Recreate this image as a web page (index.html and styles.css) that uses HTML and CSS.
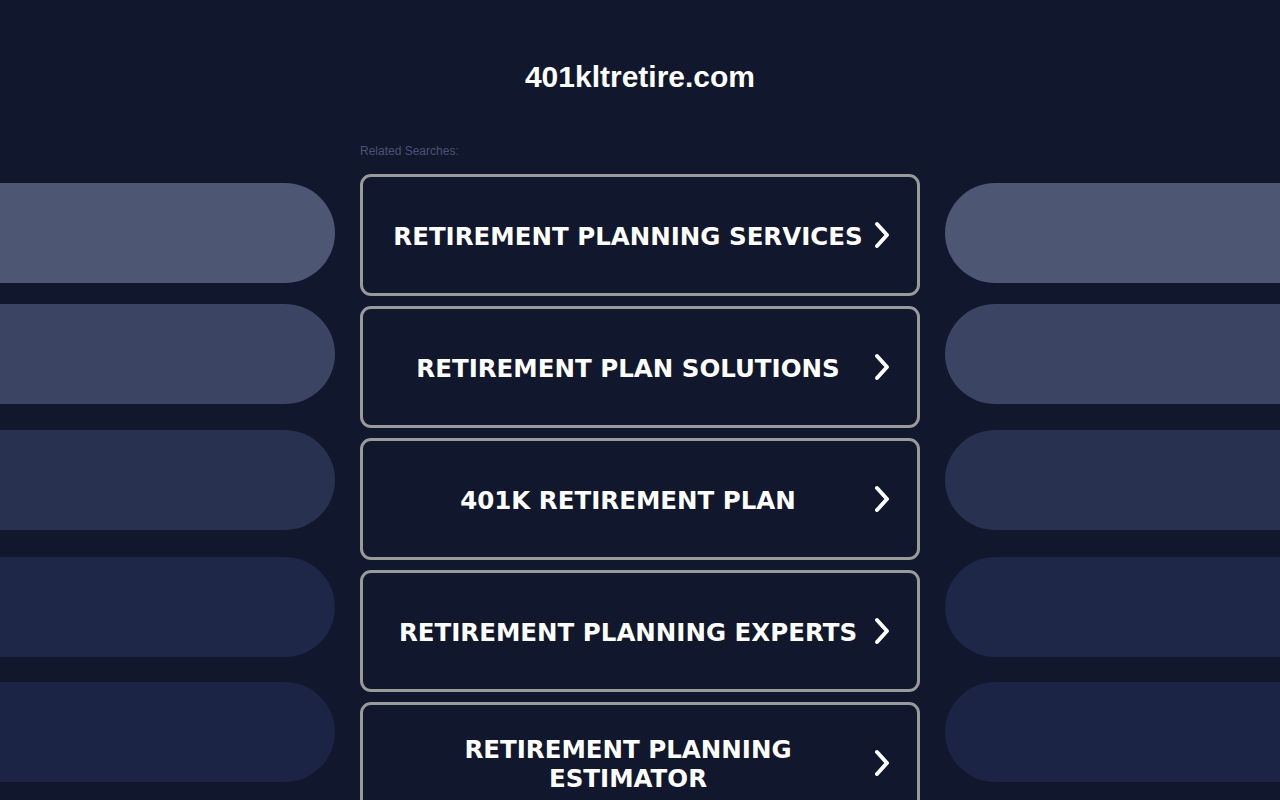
FILE: index.html
```html
<!DOCTYPE html>
<html lang="en">
<head>
<meta charset="utf-8">
<title>401kltretire.com</title>
<link rel="stylesheet" href="styles.css">
</head>
<body>
<header class="header">
  <h1 class="site-title">401kltretire.com</h1>
</header>
<main class="layout">
  <div class="side side-left">
    <div class="pill pill-1"></div>
    <div class="pill pill-2"></div>
    <div class="pill pill-3"></div>
    <div class="pill pill-4"></div>
    <div class="pill pill-5"></div>
  </div>
  <section class="center">
    <div class="related">Related Searches:</div>
    <a class="search-btn" href="#"><span class="label">RETIREMENT PLANNING SERVICES</span><svg class="chev" viewBox="0 0 20 30" width="20" height="30"><path d="M5 4 L15 15 L5 26" fill="none" stroke="#fff" stroke-width="4" stroke-linecap="round" stroke-linejoin="round"/></svg></a>
    <a class="search-btn" href="#"><span class="label">RETIREMENT PLAN SOLUTIONS</span><svg class="chev" viewBox="0 0 20 30" width="20" height="30"><path d="M5 4 L15 15 L5 26" fill="none" stroke="#fff" stroke-width="4" stroke-linecap="round" stroke-linejoin="round"/></svg></a>
    <a class="search-btn" href="#"><span class="label">401K RETIREMENT PLAN</span><svg class="chev" viewBox="0 0 20 30" width="20" height="30"><path d="M5 4 L15 15 L5 26" fill="none" stroke="#fff" stroke-width="4" stroke-linecap="round" stroke-linejoin="round"/></svg></a>
    <a class="search-btn" href="#"><span class="label">RETIREMENT PLANNING EXPERTS</span><svg class="chev" viewBox="0 0 20 30" width="20" height="30"><path d="M5 4 L15 15 L5 26" fill="none" stroke="#fff" stroke-width="4" stroke-linecap="round" stroke-linejoin="round"/></svg></a>
    <a class="search-btn" href="#"><span class="label">RETIREMENT PLANNING ESTIMATOR</span><svg class="chev" viewBox="0 0 20 30" width="20" height="30"><path d="M5 4 L15 15 L5 26" fill="none" stroke="#fff" stroke-width="4" stroke-linecap="round" stroke-linejoin="round"/></svg></a>
  </section>
  <div class="side side-right">
    <div class="pill pill-1"></div>
    <div class="pill pill-2"></div>
    <div class="pill pill-3"></div>
    <div class="pill pill-4"></div>
    <div class="pill pill-5"></div>
  </div>
</main>
</body>
</html>
```

FILE: styles.css
```css
html, body {
  margin: 0;
  padding: 0;
  background: #11172c;
  height: 100%;
  overflow: hidden;
}
body {
  font-family: "Liberation Sans", Arial, sans-serif;
  color: #fff;
}
.header {
  padding-top: 59px;
  text-align: center;
}
.site-title {
  margin: 0;
  font-size: 30px;
  line-height: 36px;
  font-weight: bold;
  color: #fff;
}
.layout {
  display: grid;
  grid-template-columns: 1fr 560px 1fr;
  column-gap: 25px;
}
.side {
  display: flex;
  flex-direction: column;
  padding-top: 88px;
}
.pill {
  height: 100px;
  flex: none;
}
.side-left .pill {
  border-radius: 0 50px 50px 0;
}
.side-right .pill {
  border-radius: 50px 0 0 50px;
}
.pill-1 { background: #4d5672; }
.pill-2 { background: #3b4462; margin-top: 21px; }
.pill-3 { background: #283150; margin-top: 26px; }
.pill-4 { background: #1e2747; margin-top: 27px; }
.pill-5 { background: #1b2444; margin-top: 25px; }

.center {
  padding-top: 49px;
  display: flex;
  flex-direction: column;
}
.related {
  font-size: 12px;
  line-height: 14px;
  color: #4a5375;
  margin-bottom: 16px;
}
.search-btn {
  position: relative;
  box-sizing: border-box;
  height: 122px;
  margin-bottom: 10px;
  border: 3px solid #9a9a9a;
  border-radius: 11px;
  background: #11172c;
  display: flex;
  align-items: center;
  justify-content: center;
  padding: 2px 47px 0 23px;
  text-decoration: none;
  color: #fff;
}
.label {
  font-family: "DejaVu Sans", Verdana, sans-serif;
  font-weight: bold;
  font-size: 24.5px;
  line-height: 29px;
  text-align: center;
}
.chev {
  position: absolute;
  right: 25px;
  top: 50%;
  margin-top: -15px;
}
```
